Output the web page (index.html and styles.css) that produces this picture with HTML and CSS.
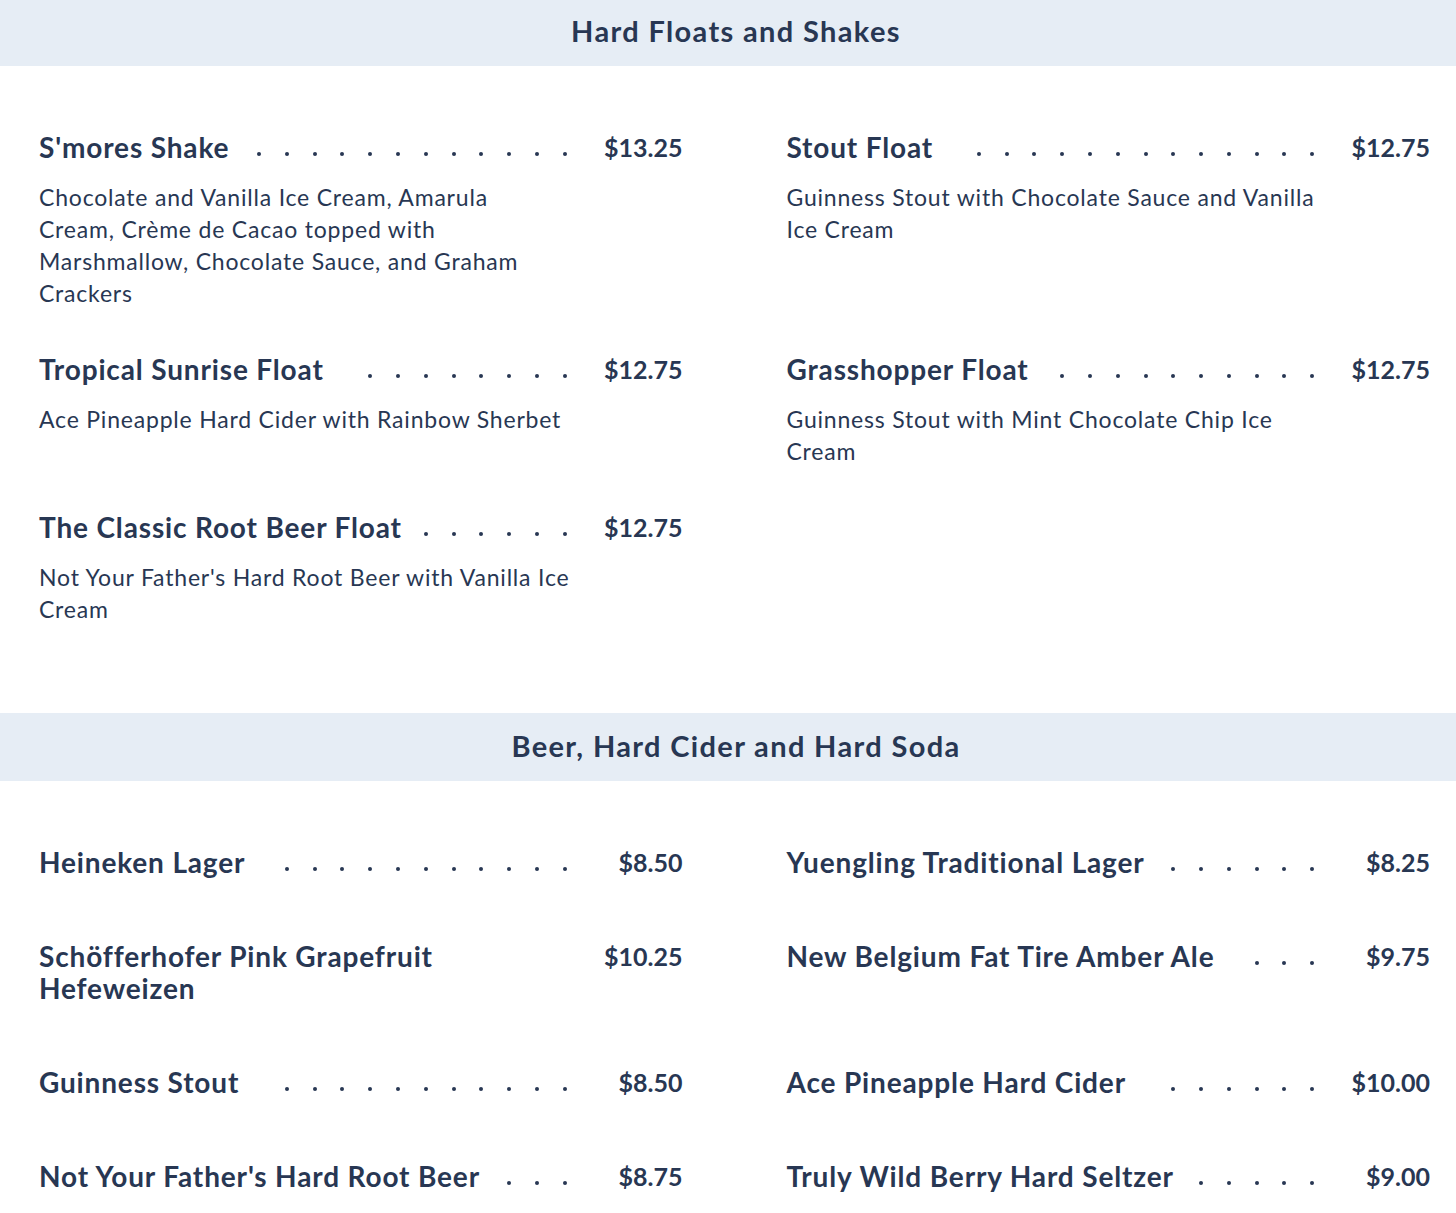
FILE: index.html
```html
<!DOCTYPE html>
<html lang="en">
<head>
<meta charset="utf-8">
<title>Menu</title>
<link rel="stylesheet" href="styles.css">
</head>
<body>
<div class="page">
  <section class="section">
    <h2 class="band">Hard Floats and Shakes</h2>
    <div class="grid">
      <div class="item">
        <div class="head"><span class="name">S'mores Shake</span><span class="dots"><i></i><i></i><i></i><i></i><i></i><i></i><i></i><i></i><i></i><i></i><i></i><i></i><i></i><i></i><i></i><i></i><i></i><i></i><i></i><i></i></span><span class="price">$13.25</span></div>
        <p class="desc">Chocolate and Vanilla Ice Cream, Amarula<br>Cream, Crème de Cacao topped with<br>Marshmallow, Chocolate Sauce, and Graham<br>Crackers</p>
      </div>
      <div class="item">
        <div class="head"><span class="name">Stout Float</span><span class="dots"><i></i><i></i><i></i><i></i><i></i><i></i><i></i><i></i><i></i><i></i><i></i><i></i><i></i><i></i><i></i><i></i><i></i><i></i><i></i><i></i></span><span class="price">$12.75</span></div>
        <p class="desc">Guinness Stout with Chocolate Sauce and Vanilla<br>Ice Cream</p>
      </div>
      <div class="item">
        <div class="head"><span class="name">Tropical Sunrise Float</span><span class="dots"><i></i><i></i><i></i><i></i><i></i><i></i><i></i><i></i><i></i><i></i><i></i><i></i><i></i><i></i><i></i><i></i><i></i><i></i><i></i><i></i></span><span class="price">$12.75</span></div>
        <p class="desc">Ace Pineapple Hard Cider with Rainbow Sherbet</p>
      </div>
      <div class="item">
        <div class="head"><span class="name">Grasshopper Float</span><span class="dots"><i></i><i></i><i></i><i></i><i></i><i></i><i></i><i></i><i></i><i></i><i></i><i></i><i></i><i></i><i></i><i></i><i></i><i></i><i></i><i></i></span><span class="price">$12.75</span></div>
        <p class="desc">Guinness Stout with Mint Chocolate Chip Ice<br>Cream</p>
      </div>
      <div class="item">
        <div class="head"><span class="name">The Classic Root Beer Float</span><span class="dots"><i></i><i></i><i></i><i></i><i></i><i></i><i></i><i></i><i></i><i></i><i></i><i></i><i></i><i></i><i></i><i></i><i></i><i></i><i></i><i></i></span><span class="price">$12.75</span></div>
        <p class="desc">Not Your Father's Hard Root Beer with Vanilla Ice<br>Cream</p>
      </div>
    </div>
  </section>
  <section class="section">
    <h2 class="band">Beer, Hard Cider and Hard Soda</h2>
    <div class="grid">
      <div class="item">
        <div class="head"><span class="name">Heineken Lager</span><span class="dots"><i></i><i></i><i></i><i></i><i></i><i></i><i></i><i></i><i></i><i></i><i></i><i></i><i></i><i></i><i></i><i></i><i></i><i></i><i></i><i></i></span><span class="price">$8.50</span></div>
      </div>
      <div class="item">
        <div class="head"><span class="name">Yuengling Traditional Lager</span><span class="dots"><i></i><i></i><i></i><i></i><i></i><i></i><i></i><i></i><i></i><i></i><i></i><i></i><i></i><i></i><i></i><i></i><i></i><i></i><i></i><i></i></span><span class="price">$8.25</span></div>
      </div>
      <div class="item">
        <div class="head"><span class="name">Schöfferhofer Pink Grapefruit Hefeweizen</span><span class="dots"><i></i><i></i><i></i><i></i><i></i><i></i><i></i><i></i><i></i><i></i><i></i><i></i><i></i><i></i><i></i><i></i><i></i><i></i><i></i><i></i></span><span class="price">$10.25</span></div>
      </div>
      <div class="item">
        <div class="head"><span class="name">New Belgium Fat Tire Amber Ale</span><span class="dots"><i></i><i></i><i></i><i></i><i></i><i></i><i></i><i></i><i></i><i></i><i></i><i></i><i></i><i></i><i></i><i></i><i></i><i></i><i></i><i></i></span><span class="price">$9.75</span></div>
      </div>
      <div class="item">
        <div class="head"><span class="name">Guinness Stout</span><span class="dots"><i></i><i></i><i></i><i></i><i></i><i></i><i></i><i></i><i></i><i></i><i></i><i></i><i></i><i></i><i></i><i></i><i></i><i></i><i></i><i></i></span><span class="price">$8.50</span></div>
      </div>
      <div class="item">
        <div class="head"><span class="name">Ace Pineapple Hard Cider</span><span class="dots"><i></i><i></i><i></i><i></i><i></i><i></i><i></i><i></i><i></i><i></i><i></i><i></i><i></i><i></i><i></i><i></i><i></i><i></i><i></i><i></i></span><span class="price">$10.00</span></div>
      </div>
      <div class="item">
        <div class="head"><span class="name">Not Your Father's Hard Root Beer</span><span class="dots"><i></i><i></i><i></i><i></i><i></i><i></i><i></i><i></i><i></i><i></i><i></i><i></i><i></i><i></i><i></i><i></i><i></i><i></i><i></i><i></i></span><span class="price">$8.75</span></div>
      </div>
      <div class="item">
        <div class="head"><span class="name">Truly Wild Berry Hard Seltzer</span><span class="dots"><i></i><i></i><i></i><i></i><i></i><i></i><i></i><i></i><i></i><i></i><i></i><i></i><i></i><i></i><i></i><i></i><i></i><i></i><i></i><i></i></span><span class="price">$9.00</span></div>
      </div>
    </div>
  </section>
</div>
</body>
</html>
```

FILE: styles.css
```css
html, body {
  margin: 0;
  padding: 0;
  background: #ffffff;
}
body {
  font-family: Lato, "Noto Sans", sans-serif;
  color: #283753;
}
.page {
  margin-top: -2px;
}
.band {
  margin: 0;
  height: 68px;
  box-sizing: border-box;
  padding: 0 0 4px 16px;
  display: flex;
  align-items: center;
  justify-content: center;
  background: #e6edf5;
  font-size: 29px;
  font-weight: 700;
  letter-spacing: 1.35px;
  color: #283753;
}
.grid {
  display: grid;
  grid-template-columns: 1fr 1fr;
  column-gap: 104px;
  padding: 65px 26px 44px 39px;
}
.item {
  margin-bottom: 44px;
}
.head {
  display: flex;
  align-items: flex-start;
  margin-bottom: 18px;
}
.name {
  flex: 0 1 auto;
  font-size: 28px;
  font-weight: 700;
  letter-spacing: 0.85px;
  line-height: 32px;
}
.dots {
  flex: 1 1 0;
  min-width: 0;
  height: 32px;
  overflow: hidden;
  display: flex;
  flex-direction: row-reverse;
  flex-wrap: wrap;
}
.dots i {
  flex: none;
  position: relative;
  width: 27.79px;
  height: 32px;
}
.dots i::after {
  content: "";
  position: absolute;
  left: 18px;
  top: 21px;
  width: 4px;
  height: 4px;
  border-radius: 50%;
  background: #283753;
}
.price {
  flex: none;
  width: 110px;
  text-align: right;
  font-size: 25px;
  font-weight: 700;
  line-height: 32px;
}
.desc {
  margin: 0;
  padding-right: 60px;
  font-size: 23px;
  letter-spacing: 0.8px;
  line-height: 32px;
}
```
